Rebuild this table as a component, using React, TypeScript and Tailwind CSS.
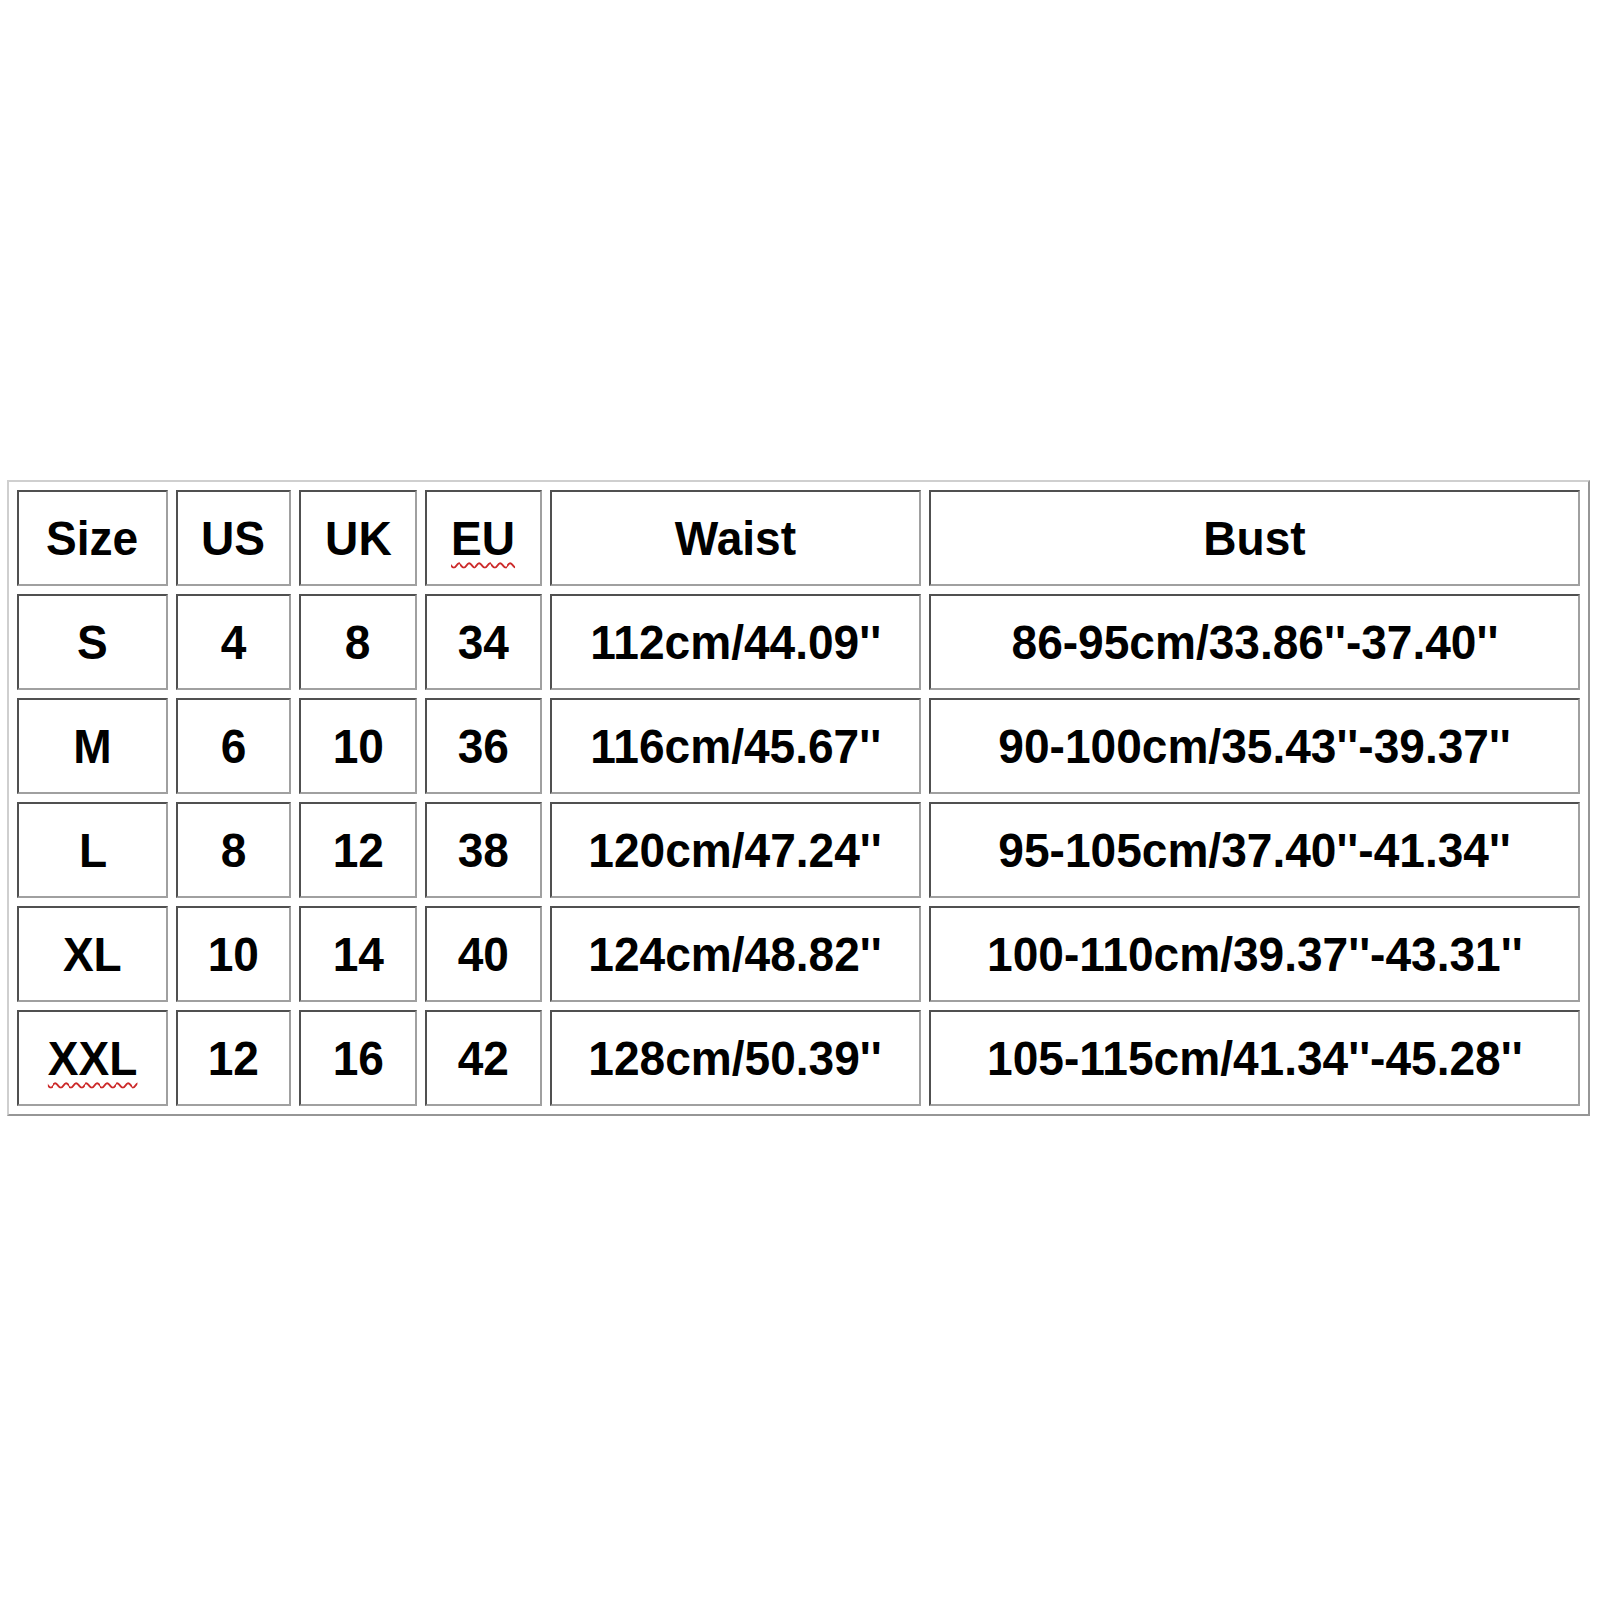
const header = ["Size", "US", "UK", "EU", "Waist", "Bust"];

const rows: string[][] = [
  ["S", "4", "8", "34", "112cm/44.09''", "86-95cm/33.86''-37.40''"],
  ["M", "6", "10", "36", "116cm/45.67''", "90-100cm/35.43''-39.37''"],
  ["L", "8", "12", "38", "120cm/47.24''", "95-105cm/37.40''-41.34''"],
  ["XL", "10", "14", "40", "124cm/48.82''", "100-110cm/39.37''-43.31''"],
  ["XXL", "12", "16", "42", "128cm/50.39''", "105-115cm/41.34''-45.28''"],
];

const widths = ["w-[151px]", "w-[115px]", "w-[118px]", "w-[117px]", "w-[371px]", "w-[651px]"];

// words the spell checker flagged in the original screenshot
const flagged = new Set(["EU", "XXL"]);

function Cell({ text, col }: { text: string; col: number }) {
  return (
    <td
      className={`${widths[col]} h-[96px] p-0 text-center align-middle whitespace-nowrap border-2 border-t-[#505050] border-l-[#505050] border-b-[#a0a0a0] border-r-[#a0a0a0]`}
    >
      <span className="inline-block scale-x-[0.94]">
        {flagged.has(text) ? (
          <span className="underline decoration-wavy decoration-[#cc2a2a] decoration-2 underline-offset-[7px]">
            {text}
          </span>
        ) : (
          text
        )}
      </span>
    </td>
  );
}

export default function App() {
  return (
    <div className="w-[1600px] h-[1600px] bg-white pt-[480px] pl-[7px]">
      <table
        className="w-[1583px] table-fixed border-separate border-spacing-x-[8px] border-spacing-y-[8px] border-2 border-t-[#cfcfcf] border-l-[#cfcfcf] border-b-[#969696] border-r-[#969696] text-black font-bold text-[49px] leading-none"
        style={{ fontFamily: '"Liberation Sans", Arial, sans-serif' }}
      >
        <tbody>
          <tr>
            {header.map((h, i) => (
              <Cell key={h} text={h} col={i} />
            ))}
          </tr>
          {rows.map((r) => (
            <tr key={r[0]}>
              {r.map((c, i) => (
                <Cell key={i} text={c} col={i} />
              ))}
            </tr>
          ))}
        </tbody>
      </table>
    </div>
  );
}
